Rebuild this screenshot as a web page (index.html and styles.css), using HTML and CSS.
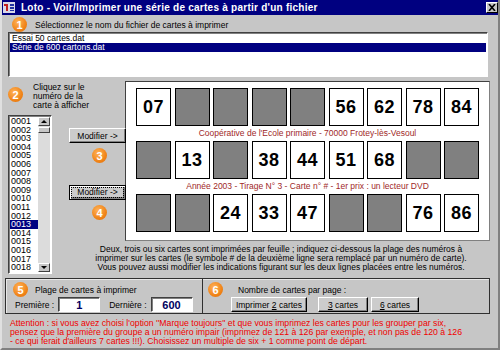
FILE: index.html
```html
<!DOCTYPE html>
<html lang="fr">
  <head>
    <meta charset="UTF-8" />
    <title>Loto - Voir/Imprimer</title>
    <link rel="stylesheet" href="styles.css">
  </head>
  <body>
    <div class="window">
      <header class="titlebar">
        <svg class="app-icon" width="12" height="11" viewBox="0 0 12 11">
          <rect x="0" y="0" width="12" height="11" fill="#d8d8e8" />
          <rect x="1" y="2" width="4" height="2" fill="#c02020" />
          <rect x="3" y="4" width="2" height="5" fill="#c02020" />
          <rect x="7" y="2" width="4" height="2" fill="#2030a0" />
          <rect x="7" y="5" width="4" height="2" fill="#2030a0" />
          <rect x="7" y="8" width="4" height="1" fill="#2030a0" />
        </svg>
        <span class="title">Loto - Voir/Imprimer une série de cartes à partir d'un fichier</span>
        <span class="close">
          <svg width="8" height="7" viewBox="0 0 8 7">
            <path d="M1 0 L7 7 M7 0 L1 7" stroke="#000" stroke-width="1.6" />
          </svg>
        </span>
      </header>

      <main class="content">
        <div class="step step-file">
          <span class="badge">1</span>
          <span>Sélectionnez le nom du fichier de cartes à imprimer</span>
        </div>
        <ul class="filelist">
          <li>Essai 50 cartes.dat</li>
          <li class="selected">Série de 600 cartons.dat</li>
        </ul>

        <section class="middle">
          <div class="step step-card">
            <span class="badge">2</span>
            <p>Cliquez sur le<br />numéro de la<br />carte à afficher</p>
          </div>

          <div class="numlist">
            <ul id="numbers"></ul>
            <div class="scrollbar">
              <span class="arrow up"></span>
              <span class="thumb"></span>
              <span class="track"></span>
              <span class="arrow down"></span>
            </div>
          </div>

          <div class="actions">
            <button class="btn modify">Modifier -&gt;</button>
            <span class="badge">3</span>
            <button class="btn modify focused"><span>Modifier -&gt;</span></button>
            <span class="badge">4</span>
          </div>

          <article class="cards">
            <div class="row">
              <p class="cell">07</p><p class="cell off"></p><p class="cell off"></p><p class="cell off"></p><p class="cell off"></p><p class="cell">56</p><p class="cell">62</p><p class="cell">78</p><p class="cell">84</p>
            </div>
            <p class="caption">Coopérative de l'Ecole primaire - 70000 Frotey-lès-Vesoul</p>
            <div class="row">
              <p class="cell off"></p><p class="cell">13</p><p class="cell off"></p><p class="cell">38</p><p class="cell">44</p><p class="cell">51</p><p class="cell">68</p><p class="cell off"></p><p class="cell off"></p>
            </div>
            <p class="caption">Année 2003 - Tirage N° 3 - Carte n° # - 1er prix : un lecteur DVD</p>
            <div class="row">
              <p class="cell off"></p><p class="cell off"></p><p class="cell">24</p><p class="cell">33</p><p class="cell">47</p><p class="cell off"></p><p class="cell off"></p><p class="cell">76</p><p class="cell">86</p>
            </div>
          </article>

          <p class="note">
            Deux, trois ou six cartes sont imprimées par feuille ; indiquez ci-dessous la plage des numéros à<br />
            imprimer sur les cartes (le symbole # de la deuxième ligne sera remplacé par un numéro de carte).<br />
            Vous pouvez aussi modifier les indications figurant sur les deux lignes placées entre les numéros.
          </p>
        </section>

        <section class="options">
          <div class="group range">
            <div class="step">
              <span class="badge">5</span>
              <span>Plage de cartes à imprimer</span>
            </div>
            <div class="fields">
              <label>Première :</label>
              <span class="field">1</span>
              <label>Dernière :</label>
              <span class="field">600</span>
            </div>
          </div>
          <div class="group perpage">
            <div class="step">
              <span class="badge">6</span>
              <span>Nombre de cartes par page :</span>
            </div>
            <div class="buttons">
              <button class="btn print2">Imprimer <u>2</u> cartes</button>
              <button class="btn print3"><u>3</u> cartes</button>
              <button class="btn print6"><u>6</u> cartes</button>
            </div>
          </div>
        </section>

        <p class="warning">
          Attention : si vous avez choisi l'option ''Marque toujours'' et que vous imprimez les cartes pour les grouper par six,<br />
          pensez que la première du groupe a un numéro impair (imprimez de 121 à 126 par exemple, et non pas de 120 à 126<br />
          - ce qui ferait d'ailleurs 7 cartes !!!). Choisissez un multiple de six + 1 comme point de départ.
        </p>
      </main>
    </div>

    <script>
      let html = "";
      for (let i = 1; i <= 18; i++) {
        const num = String(i).padStart(4, "0");
        if (i === 13) {
          html += "<li class='selected'>" + num + "</li>";
        } else {
          html += "<li>" + num + "</li>";
        }
      }
      document.getElementById("numbers").innerHTML = html;
    </script>
  </body>
</html>
```

FILE: styles.css
```css
* {
  box-sizing: border-box;
}
body {
  margin: 0;
  background-color: #c6c6c6;
  font-family: "Liberation Sans", Arial, sans-serif;
  font-size: 8.5px;
  color: #000;
}
p,
ul {
  margin: 0;
  padding: 0;
}
ul {
  list-style: none;
}
.window {
  width: 500px;
  height: 350px;
  overflow: hidden;
  background-color: #c6c6c6;
  border-left: 2px solid #e0e0e0;
  border-right: 2px solid #808080;
  border-bottom: 2px solid #808080;
}
.titlebar {
  height: 15px;
  display: flex;
  align-items: center;
  padding: 0 0 0 1px;
  background-color: #000080;
}
.app-icon {
  display: block;
}
.title {
  margin-left: 6px;
  color: #fff;
  font-weight: bold;
  font-size: 10px;
  letter-spacing: 0.25px;
  white-space: nowrap;
}
.close {
  margin-left: auto;
  width: 12px;
  height: 11px;
  display: flex;
  align-items: center;
  justify-content: center;
  background-color: #c6c6c6;
  border: 1px solid;
  border-color: #fff #000 #000 #fff;
}
.content {
  padding: 0 8px 0 6px;
}

/* numbered steps */
.step {
  display: flex;
  align-items: center;
  white-space: nowrap;
}
.badge {
  width: 15px;
  height: 15px;
  border-radius: 50%;
  display: inline-flex;
  align-items: center;
  justify-content: center;
  flex-shrink: 0;
  background: radial-gradient(circle at 40% 35%, #ffb35a, #f08418 60%, #e06e08);
  color: #fff;
  font-weight: bold;
  font-size: 11px;
}
.step-file {
  height: 17px;
  padding-top: 2px;
}
.step-file .badge {
  margin-left: 4px;
  margin-right: 8px;
}

/* sunken list boxes */
.filelist,
.numlist,
.field {
  background-color: #fff;
  border: 1px solid;
  border-color: #404040 #fff #fff #404040;
  box-shadow: inset 1px 1px 0 #808080;
}
.filelist {
  height: 45px;
  margin-right: 2px;
  padding: 1px 1px;
}
.filelist li {
  height: 9px;
  line-height: 9px;
  padding-left: 2px;
  white-space: nowrap;
}
.selected {
  background-color: #000080;
  color: #fff;
}

/* middle part */
.middle {
  margin-top: 4px;
  display: grid;
  grid-template-columns: 44px 73px 365px;
  grid-template-rows: 34px 126px 33px;
}
.step-card {
  grid-column: 1 / 3;
  grid-row: 1;
  align-items: flex-start;
  padding-top: 2px;
}
.step-card .badge {
  margin-top: 4px;
  margin-right: 10px;
}
.step-card p {
  line-height: 9px;
}
.numlist {
  grid-column: 1;
  grid-row: 2 / 4;
  display: flex;
  padding: 1px;
}
.numlist ul {
  flex: 1;
}
.numlist li {
  height: 8.6px;
  line-height: 8.6px;
  font-size: 9px;
  padding-left: 1px;
}
.scrollbar {
  width: 12px;
  display: flex;
  flex-direction: column;
  background-color: #dcdcdc;
}
.scrollbar .arrow,
.scrollbar .thumb {
  display: block;
  background-color: #c6c6c6;
  border: 1px solid;
  border-color: #fff #404040 #404040 #fff;
  position: relative;
}
.scrollbar .arrow {
  height: 9px;
}
.scrollbar .thumb {
  height: 6px;
  margin-top: 1px;
}
.scrollbar .track {
  flex: 1;
}
.arrow::after {
  content: "";
  position: absolute;
  left: 2px;
  top: 2px;
  border-left: 3px solid transparent;
  border-right: 3px solid transparent;
}
.up::after {
  border-bottom: 3px solid #000;
}
.down::after {
  border-top: 3px solid #000;
}

.actions {
  grid-column: 2;
  grid-row: 2;
  display: flex;
  flex-direction: column;
  align-items: center;
  padding-left: 16px;
  padding-top: 13px;
}
.btn {
  font-family: "Liberation Sans", Arial, sans-serif;
  font-size: 8.5px;
  color: #000;
  background-color: #cccccc;
  border: 1px solid;
  border-color: #fff #000 #000 #fff;
  box-shadow: inset -1px -1px 0 #808080;
  padding: 0;
  height: 15px;
  white-space: nowrap;
}
.modify {
  width: 57px;
  z-index: 1;
  margin-left: 2px;
}
.actions .badge {
  margin-top: 5px;
  margin-left: 6px;
}
.actions .badge + .btn {
  margin-top: 22px;
}
.focused {
  border: 1px solid #000;
  box-shadow: inset 1px 1px 0 #fff, inset -2px -2px 0 #808080;
  padding: 1px;
}
.focused span {
  display: block;
  border: 1px dotted #000;
  line-height: 9px;
}

.cards {
  grid-column: 3;
  grid-row: 1 / 3;
  background-color: #fff;
  border: 1px solid;
  border-color: #404040 #808080 #808080 #404040;
  padding: 6px 0 0 10px;
}
.row {
  display: grid;
  grid-template-columns: repeat(9, 35px);
  column-gap: 3.5px;
  height: 38px;
}
.cell {
  border: 1px solid #000;
  background-color: #fff;
  display: flex;
  align-items: center;
  justify-content: center;
  font-size: 18px;
  font-weight: bold;
  letter-spacing: 0.5px;
}
.off {
  background-color: #808080;
}
.caption {
  height: 15px;
  line-height: 15px;
  width: 343px;
  text-align: center;
  color: #a02828;
  white-space: nowrap;
}

.note {
  grid-column: 2 / 4;
  grid-row: 3;
  padding: 4px 0 0 20px;
  line-height: 9px;
  text-align: center;
  white-space: nowrap;
}

/* bottom groups */
.options {
  margin: 4px 0 0 -3px;
  height: 36px;
  display: flex;
  border: 1px solid #303030;
  box-shadow: inset 1px 1px 0 #e8e8e8;
}
.group {
  padding-top: 3px;
}
.range {
  width: 197px;
  border-right: 1px solid #303030;
  padding-left: 7px;
}
.range .badge {
  margin-right: 7px;
}
.fields {
  display: flex;
  align-items: center;
  padding-left: 2px;
  height: 15px;
}
.field {
  width: 42px;
  height: 15px;
  margin-left: 4px;
  margin-right: 9px;
  display: flex;
  align-items: center;
  justify-content: center;
  font-size: 11px;
  font-weight: bold;
  color: #000060;
}
.perpage {
  flex: 1;
  padding-left: 5px;
}
.perpage .badge {
  margin-right: 15px;
}
.buttons {
  display: flex;
  padding-left: 23px;
}
.print2 {
  width: 76px;
}
.print3 {
  width: 50px;
  margin-left: 11px;
}
.print6 {
  width: 48px;
  margin-left: 3px;
}

.warning {
  margin-top: 5px;
  padding-left: 2px;
  line-height: 9px;
  font-size: 8.7px;
  color: #f00000;
  white-space: nowrap;
}
```
